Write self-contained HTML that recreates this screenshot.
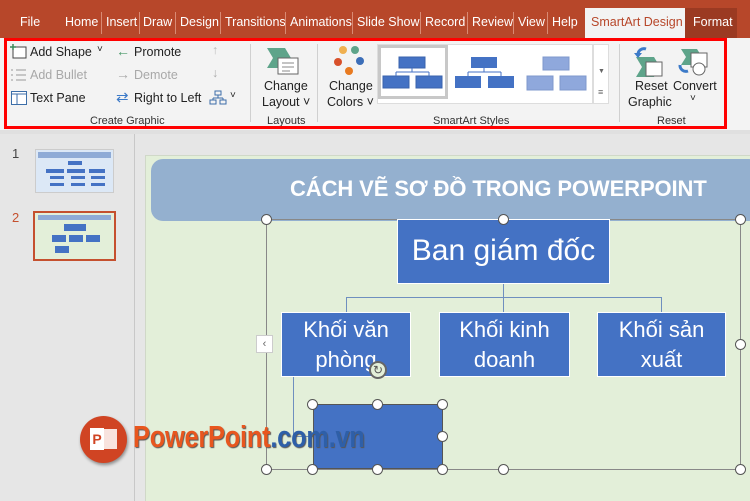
<!DOCTYPE html>
<html><head><meta charset="utf-8"><style>
*{margin:0;padding:0;box-sizing:border-box}
body{width:750px;height:501px;overflow:hidden;background:#e6e6e6;font-family:"Liberation Sans",sans-serif;position:relative}
.a{position:absolute}
.tab{position:absolute;top:15px;font-size:12.5px;color:#fff;white-space:nowrap}
.sep{position:absolute;top:12px;width:1px;height:22px;background:#d98a74}
.rb{font-size:12.5px;color:#222;white-space:nowrap;position:absolute}
.dis{color:#a8a8a8}
.grp{font-size:11px;color:#333;position:absolute;top:115px}
.vs{position:absolute;top:44px;width:1px;height:78px;background:#d0d0d0}
.box{position:absolute;background:#4472c4;border:1px solid #fff;color:#fff;text-align:center;font-family:"Liberation Sans",sans-serif}
.h{position:absolute;width:11px;height:11px;border-radius:50%;background:#fff;border:1.5px solid #555}
.ln{position:absolute;background:#6f8fbf}
</style></head><body>
<div class="a" style="left:0;top:0;width:750px;height:38px;background:#b7472a"></div>
<div class="tab" style="left:20px">File</div>
<div class="tab" style="left:65px">Home</div><div class="sep" style="left:101px"></div>
<div class="tab" style="left:106px">Insert</div><div class="sep" style="left:139px"></div>
<div class="tab" style="left:143px">Draw</div><div class="sep" style="left:175px"></div>
<div class="tab" style="left:180px">Design</div><div class="sep" style="left:220px"></div>
<div class="tab" style="left:225px">Transitions</div><div class="sep" style="left:285px"></div>
<div class="tab" style="left:290px">Animations</div><div class="sep" style="left:352px"></div>
<div class="tab" style="left:357px">Slide Show</div><div class="sep" style="left:420px"></div>
<div class="tab" style="left:425px">Record</div><div class="sep" style="left:467px"></div>
<div class="tab" style="left:472px">Review</div><div class="sep" style="left:513px"></div>
<div class="tab" style="left:518px">View</div><div class="sep" style="left:547px"></div>
<div class="tab" style="left:552px">Help</div>
<div class="a" style="left:585px;top:8px;width:100px;height:30px;background:#f3f3f3"></div>
<div class="tab" style="left:591px;color:#b7472a">SmartArt Design</div>
<div class="a" style="left:685px;top:8px;width:52px;height:30px;background:#9b3a22"></div>
<div class="tab" style="left:693px">Format</div>
<div class="a" style="left:0;top:38px;width:750px;height:92px;background:#f3f3f3"></div>
<div class="a" style="left:0;top:130px;width:750px;height:4px;background:#e0e0e0"></div>

<svg class="a" style="left:10px;top:44px" width="18" height="16"><rect x="3" y="3" width="13" height="11" fill="#fff" stroke="#444"/><path d="M3 0v6M0 3h6" stroke="#3a8a5a" stroke-width="1.5"/></svg>
<div class="rb" style="left:30px;top:45px">Add Shape</div><div class="rb" style="left:97px;top:44px;font-size:10px">˅</div>
<svg class="a" style="left:11px;top:68px" width="16" height="14"><path d="M0 2h2M5 2h10M0 7h2M5 7h10M0 12h2M5 12h10" stroke="#aaa" stroke-width="1.3"/></svg>
<div class="rb dis" style="left:30px;top:68px">Add Bullet</div>
<svg class="a" style="left:11px;top:91px" width="16" height="14"><rect x="0.5" y="0.5" width="15" height="13" fill="#fff" stroke="#3c6ea8"/><path d="M0 3h16M6 3v11" stroke="#3c6ea8"/></svg>
<div class="rb" style="left:30px;top:91px">Text Pane</div>
<div class="rb" style="left:116px;top:43px;color:#4a9a6a;font-size:14px">←</div><div class="rb" style="left:134px;top:45px">Promote</div>
<div class="rb" style="left:116px;top:66px;color:#aaa;font-size:14px">→</div><div class="rb dis" style="left:134px;top:68px">Demote</div>
<div class="rb" style="left:116px;top:88px;color:#3c7ac8;font-size:15px">⇄</div><div class="rb" style="left:134px;top:91px">Right to Left</div>
<div class="rb" style="left:212px;top:43px;color:#bbb">↑</div><div class="rb" style="left:212px;top:66px;color:#aaa">↓</div>
<svg class="a" style="left:209px;top:90px" width="18" height="16"><rect x="6" y="1" width="6" height="4" fill="none" stroke="#3c6ea8"/><rect x="1" y="10" width="6" height="4" fill="none" stroke="#3c6ea8"/><rect x="11" y="10" width="6" height="4" fill="none" stroke="#3c6ea8"/><path d="M9 5v3M4 8h10M4 8v2M14 8v2" stroke="#3c6ea8"/></svg>
<div class="rb" style="left:230px;top:90px;font-size:10px">˅</div>
<div class="grp" style="left:90px">Create Graphic</div>
<div class="vs" style="left:250px"></div>
<svg class="a" style="left:265px;top:46px" width="36" height="30"><path d="M2 2h18l6 10-6 10H2l6-10z" fill="#5ea48a"/><rect x="13" y="12" width="20" height="16" fill="#fff" stroke="#666"/><path d="M17 17h12M17 21h12M17 25h8" stroke="#888"/></svg>
<div class="rb" style="left:264px;top:79px">Change</div><div class="rb" style="left:262px;top:95px">Layout ˅</div>
<div class="grp" style="left:267px">Layouts</div>
<div class="vs" style="left:317px"></div>
<svg class="a" style="left:333px;top:45px" width="32" height="32"><circle cx="10" cy="5" r="4" fill="#f0b050"/><circle cx="22" cy="5" r="4" fill="#5ea48a"/><circle cx="5" cy="17" r="4" fill="#d8502a"/><circle cx="27" cy="16" r="4" fill="#3c6eb8"/><circle cx="16" cy="26" r="4" fill="#e87a20"/></svg>
<div class="rb" style="left:329px;top:79px">Change</div><div class="rb" style="left:327px;top:95px">Colors ˅</div>
<div class="a" style="left:377px;top:44px;width:216px;height:60px;background:#fff;border:1px solid #ddd"></div>
<div class="a" style="left:378px;top:45px;width:70px;height:54px;border:3px solid #c8c8c8;background:#fff"></div>
<svg class="a" style="left:380px;top:55px" width="216" height="38">
<g fill="#4472c4" stroke="#3a63ad"><rect x="19" y="2" width="26" height="11"/><rect x="3" y="21" width="26" height="12"/><rect x="36" y="21" width="26" height="12"/></g>
<path d="M32 13v4M16 17h33M16 17v4M49 17v4" stroke="#4472c4" fill="none"/>
<g fill="#4472c4"><rect x="91" y="2" width="26" height="11"/><rect x="75" y="21" width="26" height="12"/><rect x="108" y="21" width="26" height="12"/></g>
<path d="M104 13v4M88 17h33M88 17v4M121 17v4" stroke="#4472c4" fill="none"/>
<g fill="#8fa8dc" stroke="#7f98cc"><rect x="163" y="2" width="26" height="13"/><rect x="147" y="21" width="26" height="14"/><rect x="180" y="21" width="26" height="14"/></g>
</svg>
<div class="a" style="left:593px;top:44px;width:16px;height:60px;background:#fff;border:1px solid #ddd"></div>
<div class="rb" style="left:598px;top:68px;font-size:7px;color:#666">▼</div>
<div class="rb" style="left:598px;top:87px;font-size:9px;color:#666">≡</div>
<div class="grp" style="left:433px">SmartArt Styles</div>
<div class="vs" style="left:619px"></div>
<svg class="a" style="left:632px;top:45px" width="36" height="32"><path d="M4 12h18l6 10-6 10H4l6-10z" fill="#5ea48a"/><rect x="14" y="17" width="16" height="14" fill="#fff" stroke="#666"/><path d="M14 4a6 6 0 0 0-8 6" stroke="#3c7ac8" stroke-width="3" fill="none"/><path d="M2 8l4 5 4-5z" fill="#3c7ac8"/></svg>
<div class="rb" style="left:635px;top:79px">Reset</div><div class="rb" style="left:628px;top:95px">Graphic</div>
<svg class="a" style="left:677px;top:45px" width="36" height="32"><path d="M4 4h16l5 8-5 8H4l5-8z" fill="#5ea48a"/><rect x="14" y="8" width="16" height="14" fill="#fff" stroke="#666"/><circle cx="22" cy="24" r="6" fill="#fff" stroke="#666"/><path d="M3 20a6 6 0 0 0 8 6" stroke="#3c7ac8" stroke-width="3" fill="none"/></svg>
<div class="rb" style="left:673px;top:79px">Convert</div><div class="rb" style="left:690px;top:93px;font-size:10px">˅</div>
<div class="grp" style="left:657px">Reset</div>
<div class="a" style="left:4px;top:38px;width:723px;height:91px;border:3px solid #f00"></div>

<div class="a" style="left:134px;top:134px;width:1px;height:367px;background:#c8c8c8"></div>
<div class="rb" style="left:12px;top:146px;font-size:13px;color:#444">1</div>
<div class="a" style="left:35px;top:149px;width:79px;height:44px;background:#dce8f6;border:1px solid #ccc"></div>
<div class="a" style="left:38px;top:152px;width:73px;height:6px;background:#8fabd6"></div>
<svg class="a" style="left:38px;top:160px" width="72" height="30"><g fill="#4472c4"><rect x="30" y="1" width="14" height="4"/><rect x="8" y="9" width="18" height="4"/><rect x="29" y="9" width="18" height="4"/><rect x="51" y="9" width="16" height="4"/><rect x="12" y="16" width="14" height="3"/><rect x="33" y="16" width="14" height="3"/><rect x="53" y="16" width="14" height="3"/><rect x="12" y="23" width="14" height="3"/><rect x="33" y="23" width="14" height="3"/><rect x="53" y="23" width="14" height="3"/></g></svg>
<div class="rb" style="left:12px;top:210px;font-size:13px;color:#c5502e">2</div>
<div class="a" style="left:33px;top:211px;width:83px;height:50px;border:2px solid #c5502e;background:#e3efd9"></div>
<div class="a" style="left:38px;top:215px;width:73px;height:5px;background:#8fabd6"></div>
<svg class="a" style="left:38px;top:222px" width="72" height="36"><g fill="#4472c4"><rect x="26" y="2" width="22" height="7"/><rect x="14" y="13" width="14" height="7"/><rect x="31" y="13" width="14" height="7"/><rect x="48" y="13" width="14" height="7"/><rect x="17" y="24" width="14" height="7"/></g></svg>

<div class="a" style="left:145px;top:155px;width:605px;height:346px;background:#e3efd9;border-left:1px solid #d0d8c8;border-top:1px solid #d0d8c8"></div>
<div class="a" style="left:151px;top:159px;width:610px;height:62px;background:#94b0cf;border-radius:12px"></div>
<div class="a" style="left:290px;top:176px;font-size:22px;font-weight:bold;color:#fff;white-space:nowrap;letter-spacing:-0.1px">CÁCH VẼ SƠ ĐỒ TRONG POWERPOINT</div>
<div class="a" style="left:266px;top:219px;width:475px;height:251px;border:1px solid #888"></div>
<div class="ln" style="left:503px;top:283px;width:1px;height:29px"></div>
<div class="ln" style="left:346px;top:297px;width:316px;height:1px"></div>
<div class="ln" style="left:346px;top:297px;width:1px;height:15px"></div>
<div class="ln" style="left:661px;top:297px;width:1px;height:15px"></div>
<div class="ln" style="left:293px;top:376px;width:1px;height:60px"></div>
<div class="ln" style="left:293px;top:436px;width:20px;height:1px"></div>
<div class="box" style="left:397px;top:219px;width:213px;height:65px;font-size:30px;line-height:62px">Ban giám đốc</div>
<div class="box" style="left:281px;top:312px;width:130px;height:65px;font-size:22px;line-height:30px;padding-top:2px">Khối văn<br>phòng</div>
<div class="box" style="left:439px;top:312px;width:131px;height:65px;font-size:22px;line-height:30px;padding-top:2px">Khối kinh<br>doanh</div>
<div class="box" style="left:597px;top:312px;width:129px;height:65px;font-size:22px;line-height:30px;padding-top:2px">Khối sản<br>xuất</div>
<div class="a" style="left:313px;top:404px;width:130px;height:65px;background:#4472c4;border:1px solid #555"></div>
<div class="a" style="left:369px;top:361px;width:18px;height:18px;border-radius:50%;border:2px solid #666;background:#e3efd9;font-size:12px;text-align:center;line-height:14px;color:#555">↻</div>
<div class="a" style="left:256px;top:335px;width:17px;height:18px;background:#fff;border:1px solid #ccc;font-size:11px;color:#666;text-align:center;line-height:16px">‹</div>
<div class="h" style="left:261px;top:214px"></div><div class="h" style="left:498px;top:214px"></div><div class="h" style="left:735px;top:214px"></div>
<div class="h" style="left:735px;top:339px"></div>
<div class="h" style="left:261px;top:464px"></div><div class="h" style="left:498px;top:464px"></div><div class="h" style="left:735px;top:464px"></div>
<div class="h" style="left:307px;top:399px"></div><div class="h" style="left:372px;top:399px"></div><div class="h" style="left:437px;top:399px"></div>
<div class="h" style="left:437px;top:431px"></div><div class="h" style="left:307px;top:464px"></div><div class="h" style="left:372px;top:464px"></div><div class="h" style="left:437px;top:464px"></div>

<div class="a" style="left:80px;top:416px;width:47px;height:47px;border-radius:50%;background:#d04423;box-shadow:1px 2px 3px rgba(0,0,0,.4)"></div>
<div class="a" style="left:90px;top:428px;width:14px;height:22px;background:#fff;color:#d04423;font-weight:bold;font-size:14px;text-align:center;line-height:22px">P</div>
<div class="a" style="left:104px;top:429px;width:13px;height:20px;background:#fff;opacity:.85"></div>
<div class="a" style="left:133px;top:419px;font-size:31px;font-weight:bold;color:#e8561e;white-space:nowrap;transform:scaleX(0.82);transform-origin:left;letter-spacing:-0.3px;text-shadow:1px 1px 1px #555">PowerPoint<span style="color:#2e5fa8">.com.vn</span></div>
</body></html>
